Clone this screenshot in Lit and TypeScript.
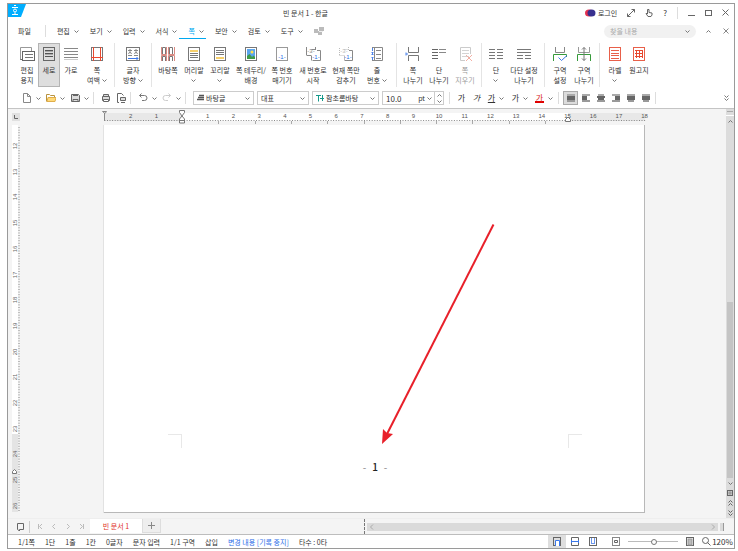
import { LitElement, html, svg, css, nothing } from "lit";
import { customElement } from "lit/decorators.js";
import { classMap } from "lit/directives/class-map.js";

const G = "#666";
const CM = 25.7;

const chevron = html`<svg class="chev" viewBox="0 0 5 3" width="5" height="3"><path d="M.5 .5 2.5 2.5 4.5 .5" /></svg>`;

const hlines = (x1: number, x2: number, ys: number[], color = "#777") =>
  ys.map((y) => svg`<path d="M${x1} ${y}H${x2}" stroke=${color} />`);

const pic = (body: unknown, w = 16, h = 16) =>
  html`<svg viewBox="0 0 ${w} ${h}" width=${w} height=${h} fill="none" stroke=${G} aria-hidden="true">${body}</svg>`;

const ribbonIcons: Record<string, unknown> = {
  paper: svg`<path d="M1.500 14V1.500h11V5" stroke="#999"/><path d="M1.500 13.500h2"/><rect x="3.500" y="5.500" width="12" height="9" fill="#fff"/>${hlines(6, 14, [8.5, 11.5])}`,
  portrait: svg`<rect x="2.500" y="1.500" width="11" height="13" />${hlines(4, 12, [4.5, 7.5, 10.5], "#555")}<path d="M4 5.500h8M4 8.500h8" stroke="#aaa"/>`,
  landscape: svg`${hlines(1, 15, [2.5, 5.5, 8.5, 11.5], "#888")}<path d="M1 13.500h14" stroke="#ccc"/>`,
  margins: svg`<rect x="2.500" y="1.500" width="11" height="13" stroke="#777"/><path d="M4.500 1v14M11.500 1v14M2 11.500h12" stroke="#e8492f"/>`,
  direction: svg`<rect x="1.500" y="1.500" width="13" height="13" stroke="#777"/><path d="M3 4.500h4M5 3v2M3.500 8 5 5.500 6.500 8M3 9.500h4M9 4.500h4M11 3v2M9.500 8 11 5.500 12.500 8M9 9.500h4" stroke="#888"/><path d="M3 12.500h10M11.500 11l1.500 1.500-1.500 1.500" stroke="#3c78e8"/>`,
  master: svg`<path d="M2.500 8V1.500h3V8M9.500 8V1.500h3V8M2.500 15V10.500h3V15M9.500 15V10.500h3V15" stroke="#777"/><path d="M1.500 1v7.500h5V1M8.500 1v7.500h6V1M1.500 15V9.500h5V15M8.500 15V9.500h6V15" stroke="#d98a82"/>`,
  header: svg`<rect x="2.500" y="1.500" width="11" height="13" stroke="#777"/><path d="M4 5h8" stroke="#f6cf6a" stroke-width="2"/>${hlines(4, 12, [7.5, 9.5, 11.5])}`,
  footer: svg`<rect x="2.500" y="1.500" width="11" height="13" stroke="#777"/>${hlines(4, 12, [4.5, 6.5, 8.5])}<path d="M4 12h8" stroke="#f6cf6a" stroke-width="2"/>`,
  border: svg`<rect x="2.500" y="1.500" width="11" height="13" stroke="#777"/><rect x="4" y="3" width="8" height="10" fill="#5aa5ee" stroke="none"/><circle cx="9" cy="6" r="1.500" fill="#ffe14a" stroke="none"/><path d="M4 13v-3l2.500-2 2.500 3 1.500-1.500L12 11v2z" fill="#3f9b49" stroke="none"/>`,
  pageno: svg`<rect x="2.500" y="1.500" width="11" height="13" stroke="#999"/><text x="8" y="13" class="num blue">-1-</text>`,
  restart: svg`<path d="M1.500 9V1M1.500 9.500h5M6.500 3.500h4M10.500 1v3" stroke="#888"/><text x="6" y="7" class="num grey">-3-</text><path d="M7.500 14.500h8V4.500H12M6.500 10v4.500" stroke="#888"/><text x="11" y="13" class="num blue">-1-</text>`,
  hide: svg`<path d="M1.500 9V1M1.500 9.500h5M6.500 3.500h4M10.500 1v3" stroke="#bbb" stroke-dasharray="1 1"/><text x="6" y="7" class="num pale">-3-</text><path d="M6.500 14.500h8V4.500H11" stroke="#888"/><path d="M6.500 10v4" stroke="#bbb"/><text x="10" y="13" class="num blue">-1-</text>`,
  lineno: svg`<path d="M5.500 1v14M3 1.500h10.500v13H3M7 4.500h5M7 8.500h5M7 12.500h5" stroke="#888"/><path d="M3.500 2v3M2.500 6.500h2M2.500 8.500h2M3.500 6v3M2.500 11.500h2M3.500 11v3" stroke="#4c83ea"/>`,
  pbreak: svg`<path d="M3.500 1v5.500h10V1M3.500 15V9.500h10V15" stroke="#777"/><path d="M1 6.500 2.500 8 1 9.500M0 8h2" stroke="#4c83ea"/>`,
  cbreak: svg`${hlines(1, 7, [3.5, 6.5, 9.5, 12.5], "#666")}${hlines(8, 15, [3.5, 6.5], "#888")}`,
  erase: svg`<path d="M13.500 8V1.500h-10v13H8" stroke="#999"/>${hlines(5, 12, [4.5, 7.5, 10.5], "#aaa")}<path d="M9 9l6 6M15 9l-6 6" stroke="#e8604a"/>`,
  columns: svg`${hlines(1, 7, [3.5, 6.5, 9.5, 12.5], "#777")}${hlines(9, 15, [3.5, 6.5, 9.5, 12.5], "#777")}`,
  multicol: svg`${hlines(1, 15, [3.5, 6.5], "#777")}${hlines(1, 7, [9.5, 12.5], "#777")}${hlines(9, 15, [9.5, 12.5], "#777")}`,
  secset: svg`<path d="M3.500 1v5.500h9V1" stroke="#888"/><path d="M1.500 15V8.500h13V11" stroke="#369a3b"/><path d="M6.500 11.500 9.500 14.500 15 9.500" stroke="#3c78e8"/>`,
  secbreak: svg`<path d="M2.500 1v5.500h11V1" stroke="#999"/><path d="M1.500 15V8.500h13V15" stroke="#369a3b"/><path d="M8 1.500v13M6 3.500 8 1.500l2 2M6 12.500l2 2 2-2" stroke="#777"/>`,
  label: svg`<rect x="2.500" y="1.500" width="11" height="13" stroke="#e8604a"/><path d="M4 4.500h8M4 7.500h8M4 9.500h8M4 12.500h8" stroke="#e8604a"/>`,
  manuscript: svg`<rect x="2.500" y="1.500" width="11" height="13" stroke="#e8604a"/><path d="M4 4.500h8M4 7.500h8M4 10.500h8M5.500 4v8M8.500 4v8M11.500 4v8" stroke="#e8492f"/>`,
};

type Item = { icon: string; a: string; b?: string; drop?: boolean; w: number; on?: boolean; off?: boolean };

const ribbon: Item[][] = [
  [
    { icon: "paper", a: "편집", b: "용지", w: 22 },
    { icon: "portrait", a: "세로", w: 22, on: true },
    { icon: "landscape", a: "가로", w: 22 },
    { icon: "margins", a: "쪽", b: "여백", drop: true, w: 30 },
  ],
  [{ icon: "direction", a: "글자", b: "방향", drop: true, w: 30 }],
  [
    { icon: "master", a: "바탕쪽", w: 26 },
    { icon: "header", a: "머리말", drop: true, w: 26 },
    { icon: "footer", a: "꼬리말", drop: true, w: 26 },
    { icon: "border", a: "쪽 테두리/", b: "배경", w: 36 },
    { icon: "pageno", a: "쪽 번호", b: "매기기", w: 26 },
    { icon: "restart", a: "새 번호로", b: "시작", w: 36 },
    { icon: "hide", a: "현재 쪽만", b: "감추기", w: 30 },
    { icon: "lineno", a: "줄", b: "번호", drop: true, w: 32 },
  ],
  [
    { icon: "pbreak", a: "쪽", b: "나누기", w: 26 },
    { icon: "cbreak", a: "단", b: "나누기", w: 26 },
    { icon: "erase", a: "쪽", b: "지우기", w: 26, off: true },
  ],
  [
    { icon: "columns", a: "단", drop: true, w: 22 },
    { icon: "multicol", a: "다단 설정", b: "나누기", w: 34 },
  ],
  [
    { icon: "secset", a: "구역", b: "설정", w: 24 },
    { icon: "secbreak", a: "구역", b: "나누기", w: 24 },
  ],
  [
    { icon: "label", a: "라벨", drop: true, w: 24 },
    { icon: "manuscript", a: "원고지", w: 24 },
  ],
];

const base = css`
  * { box-sizing: border-box; }
  button, select, input {
    font: inherit; color: inherit; background: none; border: 0; padding: 0; margin: 0;
    appearance: none; outline: none; border-radius: 0;
  }
  svg { display: block; flex: none; }
  .chev { fill: none; stroke: #777; }
  .row { display: flex; align-items: center; }
`;

@customElement("ribbon-button")
class RibbonButton extends LitElement {
  static properties = { item: { attribute: false } };
  declare item: Item;
  static styles = [base, css`
    :host { display: block; flex: none; }
    button { display: flex; flex-direction: column; align-items: center; width: 100%; height: 44px; padding-top: 3px; }
    .on { background: #dedede; box-shadow: inset 0 0 0 1px #b4b4b4; }
    .off { opacity: .5; }
    .text { padding-top: 3px; }
    span { display: flex; align-items: center; justify-content: center; gap: 2px; height: 10px; white-space: nowrap; }
    .num { font-size: 6px; text-anchor: middle; stroke: none; font-family: "Liberation Sans", sans-serif; }
    .blue { fill: #2b6be6; } .grey { fill: #888; } .pale { fill: #bbb; }
  `];
  render() {
    const i = this.item;
    return html`<button class=${classMap({ on: !!i.on, off: !!i.off })} ?disabled=${i.off}>
      ${pic(ribbonIcons[i.icon])}
      <div class="text"><span>${i.a}</span><span>${i.b ?? nothing}${i.drop ? chevron : nothing}</span></div>
    </button>`;
  }
}

@customElement("page-ruler")
class PageRuler extends LitElement {
  static styles = [base, css`
    :host { display: block; }
    svg { overflow: visible; }
    text { font: 6px "Liberation Sans", sans-serif; fill: #555; text-anchor: middle; }
  `];
  render() {
    const at = (n: number) => Math.round((78 + n * CM) * 10) / 10;
    const ticks = Array.from({ length: 211 }, (_, i) => at(-3 + i / 10));
    const nums = Array.from({ length: 21 }, (_, i) => i - 2).filter((n) => n !== 0);
    const tabs = Array.from({ length: 10 }, (_, i) => Math.round(78 + 36.3 * (i + 1)));
    return html`<svg width="541" height="16" viewBox="0 0 541 16">
      <rect x="0" y="4" width="541" height="8" fill="#e8e8e8" />
      <rect x="78" y="4" width="386" height="8" fill="#fff" />
      ${ticks.map((x) => svg`<path d="M${x} 11v1" stroke="#888" />`)}
      ${nums.map((n) => svg`<text x=${at(n)} y="9">${Math.abs(n)}</text>`)}
      ${tabs.map((x) => svg`<path d="M${x}.5 12v3" stroke="#aaa" />`)}
      <path d="M-1.500 2.500h4L1 4.500-1.500 2.500M.500 4v8" fill="#fff" stroke="#888" />
      <path d="M75.500 1.500h5v2L78 7l-2.500-3.500zM78 7l2.500 3v4h-5v-4zM75.500 11.500h5" fill="#fff" stroke="#777" />
      <path d="M461.500 12.500v-2L464 8l2.500 2.500v2z" fill="#fff" stroke="#777" />
    </svg>`;
  }
}

@customElement("side-ruler")
class SideRuler extends LitElement {
  static styles = [base, css`
    :host { display: block; }
    svg { overflow: visible; }
    text { font: 6px "Liberation Sans", sans-serif; fill: #666; text-anchor: middle; }
  `];
  render() {
    const ticks = Array.from({ length: 150 }, (_, i) => Math.round(26 + i * 25.7) / 10).filter((y) => y < 387);
    return html`<svg width="8" height="387" viewBox="0 0 8 387">
      <rect width="6" height="309" fill="#fff" /><rect y="309" width="6" height="78" fill="#e4e4e4" />
      ${ticks.map((y) => svg`<path d="M6 ${y}h2" stroke="#bbb" />`)}
      ${Array.from({ length: 15 }, (_, i) => {
        const y = Math.round(21 + i * CM);
        return svg`<text transform="translate(5 ${y}) rotate(-90)">${12 + i}</text>`;
      })}
      <path d="M.500 348.500h4v-2L2.500 344.500l-2 2z" fill="#fff" stroke="#777" />
    </svg>`;
  }
}

@customElement("app-root")
class AppRoot extends LitElement {
  static styles = [base, css`
    :host {
      display: block; height: 100vh; padding: 3px 3px 2px 7px; background: #fff; box-sizing: border-box;
      font: 7px/10px "Noto Sans CJK KR", "Noto Sans", sans-serif; color: #333; overflow: hidden;
    }
    .window { height: 100%; border: 1px solid #9a9a9a; display: flex; flex-direction: column; }
    .window > * { flex: none; }

    .title { display: grid; grid-template-columns: auto 1fr auto; height: 17px; align-items: center; }
    .logo { align-self: start; }
    .title h1 { margin: 0; font: inherit; text-align: center; }
    .tools { justify-content: flex-end; gap: 10px; padding-right: 5px; }
    .account { display: flex; align-items: center; gap: 2px; }
    .bar { width: 1px; height: 12px; background: #ddd; flex: none; }

    .menu { height: 20px; padding: 0 5px 0 10px; }
    .menus { gap: 11px; padding-left: 11px; }
    .menus button { display: flex; align-items: center; gap: 4px; height: 16px; position: relative; }
    .menus .active { color: #00a8f0; }
    .menus .active::after { content: ""; position: absolute; left: -9px; right: -2px; bottom: 0; height: 1px; background: #00a8f0; }
    .menu .bar { margin-left: 14px; }
    .find { display: flex; align-items: center; margin-left: auto; width: 92px; height: 13px; border-radius: 7px; background: #f1f1f1; padding: 0 6px; }
    .find input { flex: 1; min-width: 0; height: 10px; }
    .find input::placeholder { color: #aaa; opacity: 1; }
    .winctl { gap: 12px; margin-left: 10px; }

    .ribbon { display: flex; height: 48px; padding: 2px 0 2px 8px; }
    .group { display: flex; padding: 0 3px; border-right: 1px solid #e4e4e4; }
    .group:first-child { padding: 0 2px 0 0; }
    .group:last-child { border: 0; }

    .format { height: 20px; border-bottom: 1px solid #c4c4c4; padding: 0 5px 1px 11px; }
    .format .bar { margin: 0 4px 0 2px; }
    .tool { display: flex; align-items: center; justify-content: center; gap: 4px; flex: none; height: 14px; }
    .wide { width: 24px; } .mid { width: 15px; }
    .field { display: flex; align-items: center; height: 14px; border: 1px solid #ccc; padding: 0 3px; gap: 2px; flex: none; margin-right: 3px; }
    .field select { flex: 1; min-width: 0; height: 10px; }
    .f1 { width: 61px; margin-left: 3px; } .f2 { width: 52px; } .f3 { width: 67px; } .f4 { width: 62px; padding-right: 0; }
    .field input { flex: 1; min-width: 0; height: 12px; font-size: 8px; }
    .spin { display: flex; flex-direction: column; justify-content: space-around; align-items: center; width: 9px; height: 12px; border-left: 1px solid #ccc; }
    .up { transform: rotate(180deg); }
    .italic { font-style: italic; } .under { text-decoration: underline; }
    .glyph { font-size: 8px; }
    .red { color: #d9291c; border-bottom: 2px solid #e00000; line-height: 7px; width: 9px; text-align: center; }
    .boxed { background: #dcdcdc; box-shadow: inset 0 0 0 1px #aaa; }
    .end { margin-left: auto; }

    .work { flex: 1; min-height: 0; display: grid; grid-template: 16px minmax(0, 1fr) / 12px minmax(0, 1fr) 8px; background: #f4f4f4; overflow: hidden; }
    .corner { padding: 4px 0 0 4px; }
    .top, .canvas { display: flex; justify-content: center; padding-left: 3px; overflow: hidden; }
    .left { padding-left: 4px; }
    .canvas { padding-bottom: 5px; }
    .page { position: relative; width: 541px; background: #fff; border: 1px solid #b8b8b8; border-width: 0 1px 1px 0; box-shadow: -1px 0 #e2e2e2; display: flex; flex-direction: column; justify-content: flex-end; }
    .foot { height: 78px; display: grid; grid-template-columns: 78px 1fr 76px; justify-content: space-between; }
    .crop { width: 14px; height: 14px; border-top: 1px solid #e8e8e8; }
    .cl { justify-self: end; border-right: 1px solid #e8e8e8; } .cr { border-left: 1px solid #e8e8e8; }
    .number { margin: 0; padding-top: 26px; display: flex; justify-content: center; gap: 6px; font: 10px/14px "Noto Sans CJK KR", sans-serif; color: #222; }
    .number span { font-weight: 500; }
    .number i { font-style: normal; color: #888; }
    .arrow { position: absolute; left: 0; top: 0; }
    .vscroll { grid-column: 3; grid-row: 1 / 3; background: #dcdcdc; display: flex; flex-direction: column; align-items: center; }
    .split { width: 8px; height: 7px; border-bottom: 1px solid #fff; padding-top: 2px; }
    .split::before { content: ""; display: block; height: 1px; background: #aaa; margin: 0 1px; }
    .vtrack { flex: 1; width: 6px; display: flex; flex-direction: column; justify-content: flex-end; }
    .vthumb { height: 50%; background: #c4c4c4; }
    .vscroll button { display: flex; align-items: center; justify-content: center; width: 8px; height: 10px; flex: none; }

    .tabs { display: grid; grid-template-columns: minmax(0, 49fr) minmax(0, 51fr); height: 17px; background: #f4f4f4; border-top: 1px solid #eee; border-bottom: 1px solid #bdbdbd; }
    .tabs .row { padding-left: 9px; gap: 8px; }
    .tabs .row .bar { margin: 0 -1px 0 -3px; background: #ccc; }
    .sheet { align-self: start; width: 53px; height: 14px; background: #fff; border-right: 1px solid #ddd; color: #e0301e; margin-left: -3px; }
    .plus { align-self: start; width: 18px; height: 14px; margin-left: -8px; background: #eee; border-right: 1px solid #ddd; border-bottom: 1px solid #ddd; display: flex; align-items: center; justify-content: center; }
    .hscroll { display: flex; align-items: center; gap: 2px; padding-right: 10px; }
    .grip { width: 1px; height: 15px; border-left: 1px dashed #777; }
    .htrack { flex: 1; height: 8px; background: #dadada; display: flex; align-items: center; justify-content: space-between; padding: 0 3px; }
    .hend { width: 4px; height: 8px; background: #dadada; border-right: 1px solid #999; }

    .status { height: 13px; padding: 0 2px 0 10px; gap: 10px; white-space: nowrap; }
    .status .link { color: #2f6fe8; text-decoration: none; }
    .views { margin-left: auto; align-self: stretch; }
    .views button { display: flex; align-items: center; justify-content: center; width: 18px; height: 13px; }
    .views .sel { background: #dedede; }
    .views input { width: 50px; height: 9px; margin: 0 3px; background: linear-gradient(#bbb, #bbb) center / 100% 1px no-repeat; }
    .views .fit { margin-left: 5px; }
    .views input::-webkit-slider-thumb { appearance: none; width: 6px; height: 6px; border-radius: 50%; border: 1px solid #777; background: #fff; }
    .views .zoom { width: 14px; }
    .views .pct { font-size: 8px; width: 19px; }
  `];

  private tool(body: unknown, label: string, drop = false, cls = "") {
    return html`<button class="tool ${drop ? "wide" : "mid"} ${cls}" aria-label=${label}>${body}${drop ? chevron : nothing}</button>`;
  }

  private alignIcon(spans: number[][]) {
    return pic(spans.map(([a, b], i) => svg`<path d="M${a} ${i * 2 + 1}H${b}" stroke=${["#aaa", "#666", "#666", "#999"][i]} stroke-width="2" />`), 8, 8);
  }

  private combo(cls: string, value: string, label: string, icon: unknown = nothing) {
    return html`<div class="field ${cls}">${icon}<select aria-label=${label}><option>${value}</option></select>${chevron}</div>`;
  }

  render() {
    const menus = ["편집", "보기", "입력", "서식", "쪽", "보안", "검토", "도구"];
    return html`<div class="window">
      <header class="title">
        <svg class="logo" width="18" height="13" viewBox="0 0 18 13"><path d="M0 0h18l-5 13H0z" fill="#00aeff"/><path d="M6 1.500h2M4 3.500h6M7 8.500v2M4 10.500h6" stroke="#fff"/><circle cx="7" cy="6.500" r="1.500" fill="none" stroke="#fff"/></svg>
        <h1>빈 문서 1 - 한글</h1>
        <div class="row tools">
          <button class="account"><svg width="11" height="8" viewBox="0 0 11 8"><ellipse cx="4" cy="4" rx="4" ry="3.500" fill="#e4304f"/><ellipse cx="6.500" cy="4" rx="4" ry="3.500" fill="#38308f"/></svg>로그인</button>
          <button aria-label="전체 화면">${pic(svg`<path d="M4.500 .500h3v3M7.500 .500l-7 7M.500 4.500v3h3" />`, 8, 8)}</button>
          <button aria-label="터치">${pic(svg`<path d="M2.500 5V.500h1.500V3.500l3 .500v2L6 7.500H3L1 4.500h1.500" />`, 8, 8)}</button>
          <button aria-label="도움말" class="glyph">?</button>
          <span class="bar"></span>
          <button aria-label="최소화">${pic(svg`<path d="M0 6.500h7" />`, 7, 8)}</button>
          <button aria-label="최대화">${pic(svg`<rect x=".500" y="1.500" width="6" height="5" />`, 7, 8)}</button>
          <button aria-label="닫기">${pic(svg`<path d="M.500 .500l6 6M6.500 .500l-6 6" />`, 7, 7)}</button>
        </div>
      </header>

      <nav class="row menu">
        <button>파일</button><span class="bar"></span>
        <div class="row menus">
          ${menus.map((m) => html`<button class=${classMap({ active: m === "쪽" })}>${m}${chevron}</button>`)}
          <svg width="10" height="8" viewBox="0 0 10 8"><path d="M0 2h4v4H0zM5 0h5v4H5zM4 4h4v4H4z" fill="#bbb"/><path d="M5 4.500h4" stroke="#eee"/></svg>
        </div>
        <div class="find"><input aria-label="찾을 내용" placeholder="찾을 내용" />${chevron}</div>
        <div class="row winctl">
          <button aria-label="접기"><div class="up">${chevron}</div></button>
          <button aria-label="문서 닫기">${pic(svg`<path d="M.500 .500l5 5M5.500 .500l-5 5" stroke="#888"/>`, 6, 6)}</button>
        </div>
      </nav>

      <section class="ribbon">
        ${ribbon.map((g) => html`<div class="group">${g.map((i) => html`<ribbon-button .item=${i} style="width:${i.w}px"></ribbon-button>`)}</div>`)}
      </section>

      <section class="row format">
        ${this.tool(pic(svg`<path d="M1.500 .500h4l3 3v6h-7zM5.500 .500v3h3" stroke="#888"/>`, 10, 10), "새 문서", true)}
        ${this.tool(pic(svg`<path d="M.500 8.500v-7h3l1 1h4v2" stroke="#b8923e"/><path d="M1 8.500l1-4h8l-1 4z" fill="#ffd97a" stroke="#e0ae4a"/>`, 10, 10), "열기", true)}
        ${this.tool(pic(svg`<path d="M1.500 1.500h7l1 1v6h-8z" fill="#ddd"/><path d="M3 2.500h5M3 6.500h5v2H3z"/>`, 10, 10), "저장", true)}
        <span class="bar"></span>
        ${this.tool(pic(svg`<path d="M2.500 3V1.500h5V3M1.500 3.500h7v4h-7z" fill="#ddd"/><path d="M2.500 6.500h5v2h-5z" fill="#fff"/>`, 10, 10), "인쇄")}
        ${this.tool(pic(svg`<path d="M3 9.500H1.500v-9h4l2 2"/><path d="M4.500 4.500h5v3h-5zM5 9.500h4" fill="#ddd"/>`, 10, 10), "미리 보기")}
        <span class="bar"></span>
        ${this.tool(pic(svg`<path d="M3.500 .500l-2 2 2 2M1.500 2.500h5a2 2 0 0 1 0 5H4" stroke="#777"/>`, 10, 10), "되돌리기", true)}
        ${this.tool(pic(svg`<path d="M6.500 .500l2 2-2 2M8.500 2.500h-5a2 2 0 0 0 0 5H6" stroke="#ccc"/>`, 10, 10), "다시 실행", true)}
        <span class="bar"></span>
        ${this.combo("f1", "바탕글", "스타일", pic(svg`<path d="M2 1.500h5M1 3.500h6M0 5.500h7" stroke="#555" stroke-width="1.500"/>`, 7, 8))}
        ${this.combo("f2", "대표", "언어")}
        ${this.combo("f3", "함초롬바탕", "글꼴", pic(svg`<path d="M0 1.500h5M2.500 1.500v6M6.500 1v6M4 4.500h4" stroke="#15998a"/>`, 8, 8))}
        <div class="field f4"><input aria-label="크기" value="10.0" /><span>pt</span>${chevron}<div class="spin"><div class="up">${chevron}</div>${chevron}</div></div>
        <span class="bar"></span>
        ${this.tool(html`<span class="glyph">가</span>`, "진하게")}
        ${this.tool(html`<span class="glyph italic">가</span>`, "기울임")}
        ${this.tool(html`<span class="glyph under">가</span>`, "밑줄", true)}
        ${this.tool(html`<span class="glyph">가</span>`, "취소선", true)}
        ${this.tool(html`<span class="glyph red">가</span>`, "글자 색", true)}
        <span class="bar"></span>
        ${this.tool(this.alignIcon([[0, 8], [0, 8], [0, 8], [0, 8]]), "양쪽 정렬", false, "boxed")}
        ${this.tool(this.alignIcon([[0, 8], [0, 5], [0, 5], [0, 8]]), "왼쪽 정렬")}
        ${this.tool(this.alignIcon([[1, 7], [0, 8], [1, 7], [0, 8]]), "가운데 정렬")}
        ${this.tool(this.alignIcon([[0, 8], [3, 8], [3, 8], [0, 8]]), "오른쪽 정렬")}
        ${this.tool(this.alignIcon([[0, 8], [0, 8], [0, 8], [1, 7]]), "배분 정렬")}
        ${this.tool(this.alignIcon([[0, 8], [0, 8], [0, 8], [1, 7]]), "나눔 정렬")}
        <span class="bar"></span>
        <button class="end" aria-label="더 보기">${pic(svg`<path d="M.500 .500l2 2 2-2M.500 3.500l2 2 2-2" stroke="#777"/>`, 5, 6)}</button>
      </section>

      <main class="work">
        <div class="corner">${pic(svg`<rect width="8" height="8" fill="#e0e0e0" stroke="none"/><path d="M2.500 2v3.500H6"/>`, 8, 8)}</div>
        <div class="top"><page-ruler></page-ruler></div>
        <div class="left"><side-ruler></side-ruler></div>
        <div class="canvas">
          <article class="page">
            <svg class="arrow" width="540" height="340" viewBox="0 0 540 340"><path d="M389.500 99.500 283 309" stroke="#e8202a" stroke-width="2" fill="none"/><path d="M278 319l1-15 4 4 6 1z" fill="#e8202a"/></svg>
            <footer class="foot">
              <span class="crop cl"></span>
              <p class="number"><i>-</i><span>1</span><i>-</i></p>
              <span class="crop cr"></span>
            </footer>
          </article>
        </div>
        <div class="vscroll">
          <div class="split"></div>
          <button aria-label="위로"><div class="up">${chevron}</div></button>
          <div class="vtrack"><div class="vthumb"></div></div>
          <button aria-label="아래로">${chevron}</button>
          <button aria-label="쪽 보기">${pic(svg`<rect x=".500" y=".500" width="5" height="5"/><rect x="2" y="2" width="2" height="2" stroke="#888"/>`, 6, 6)}</button>
          <button aria-label="이전 쪽">${pic(svg`<path d="M.500 2.500l2-2 2 2M.500 5.500l2-2 2 2"/>`, 5, 6)}</button>
          <button aria-label="다음 쪽">${pic(svg`<path d="M.500 .500l2 2 2-2M.500 3.500l2 2 2-2"/>`, 5, 6)}</button>
        </div>
      </main>

      <div class="tabs">
        <div class="row">
          <button aria-label="문서 목록">${pic(svg`<path d="M.500 .500h6v6h-4v1.500l-2-1.500z"/>`, 7, 8)}</button>
          <span class="bar"></span>
          <button aria-label="처음">${pic(svg`<path d="M1.500 1v5M5 1 2.500 3.500 5 6" stroke="#bbb"/>`, 6, 7)}</button>
          <button aria-label="이전">${pic(svg`<path d="M4 1 1.500 3.500 4 6" stroke="#bbb"/>`, 6, 7)}</button>
          <button aria-label="다음">${pic(svg`<path d="M2 1l2.500 2.500L2 6" stroke="#bbb"/>`, 6, 7)}</button>
          <button aria-label="마지막">${pic(svg`<path d="M4.500 1v5M1 1l2.500 2.500L1 6" stroke="#bbb"/>`, 6, 7)}</button>
          <button class="sheet">빈 문서 1</button>
          <button class="plus" aria-label="새 탭">${pic(svg`<path d="M3.500 0v7M0 3.500h7" stroke="#888"/>`, 7, 7)}</button>
        </div>
        <div class="hscroll">
          <span class="grip"></span>
          <div class="htrack">${pic(svg`<path d="M3 .500 .500 3 3 5.500" stroke="#aaa"/>`, 4, 6)}${pic(svg`<path d="M1 .500 3.500 3 1 5.500" stroke="#aaa"/>`, 4, 6)}</div>
          <span class="hend"></span>
        </div>
      </div>

      <footer class="row status">
        <span>1/1쪽</span><span>1단</span><span>1줄</span><span>1칸</span><span>0글자</span><span>문자 입력</span><span>1/1 구역</span><span>삽입</span>
        <a class="link" href="#track">변경 내용 [기록 중지]</a><span>타수 : 0타</span>
        <div class="row views">
          <button class="sel" aria-label="쪽 윤곽">${pic(svg`<rect x=".500" y=".500" width="7" height="8"/><path d="M2.500 9V3.500h4V9" fill="#fff" stroke="#3c78e8"/>`, 8, 9)}</button>
          <button aria-label="폭 맞춤">${pic(svg`<path d="M.500 3V.500h7V3M.500 6v2.500h7V6"/><path d="M0 4.500h8M.500 3v3M7.500 3v3" stroke="#3c78e8"/>`, 8, 9)}</button>
          <button aria-label="쪽 맞춤">${pic(svg`<rect x=".500" y=".500" width="7" height="8"/><path d="M2.500 1v6M5.500 1v6M2 6.500h4" stroke="#6b97ee"/>`, 8, 9)}</button>
          <button class="fit" aria-label="축소">${pic(svg`<rect x=".500" y=".500" width="7" height="8" stroke="#888"/><path d="M2.500 3.500h3v2h-3z"/>`, 8, 9)}</button>
          <input type="range" aria-label="확대 비율" min="0" max="100" value="52" />
          <button aria-label="확대">${pic(svg`<rect x=".500" y=".500" width="7" height="8"/><rect x="2" y="2" width="4" height="6" fill="#bbb" stroke="#999"/>`, 8, 9)}</button>
          <button class="zoom" aria-label="돋보기">${pic(svg`<circle cx="3.500" cy="3.500" r="3"/><path d="M5.500 5.500l3 3"/>`, 9, 9)}</button>
          <button class="pct">120%</button>
        </div>
      </footer>
    </div>`;
  }
}
